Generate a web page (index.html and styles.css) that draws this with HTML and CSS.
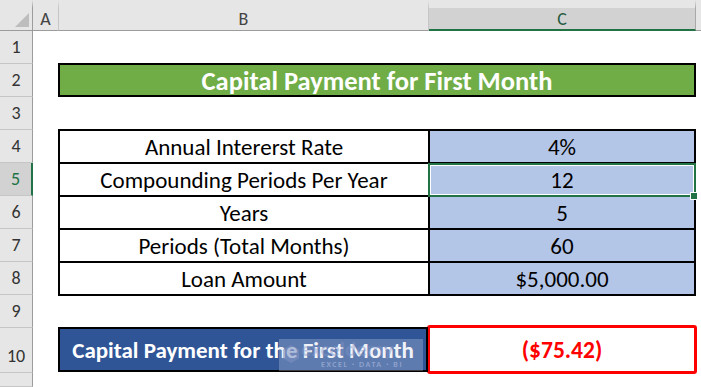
FILE: index.html
```html
<!DOCTYPE html>
<html lang="en">
<head>
<meta charset="utf-8">
<title>Capital Payment for First Month</title>
<link rel="stylesheet" href="styles.css">
</head>
<body>
<div class="sheet">
  <div class="hd corner"><span class="tri"></span></div>
  <div class="hd col">A</div>
  <div class="hd col">B</div>
  <div class="hd col sel">C</div>
  <div class="hd rest"></div>

  <div class="rh" style="grid-row:2">1</div>
  <div class="rh" style="grid-row:3">2</div>
  <div class="rh" style="grid-row:4">3</div>
  <div class="rh" style="grid-row:5">4</div>
  <div class="rh rsel" style="grid-row:6">5</div>
  <div class="rh" style="grid-row:7">6</div>
  <div class="rh" style="grid-row:8">7</div>
  <div class="rh" style="grid-row:9">8</div>
  <div class="rh" style="grid-row:10">9</div>
  <div class="rh" style="grid-row:11">10</div>
  <div class="rh" style="grid-row:12"></div>

  <div class="title">Capital Payment for First Month</div>

  <div class="table">
    <div class="lbl">Annual Intererst Rate</div><div class="val">4%</div>
    <div class="lbl">Compounding Periods Per Year</div><div class="val active">12</div>
    <div class="lbl">Years</div><div class="val">5</div>
    <div class="lbl">Periods (Total Months)</div><div class="val">60</div>
    <div class="lbl">Loan Amount</div><div class="val">$5,000.00</div>
  </div>

  <div class="result-label">Capital Payment for the First Month
    <div class="wm">
      <svg class="wm-icon" width="18" height="20" viewBox="0 0 18 20"><path d="M9 1 L17 5.5 L17 14.5 L9 19 L1 14.5 L1 5.5 Z" fill="#7d92c2"/></svg>
      <span class="wm-name">exceldemy</span>
      <span class="wm-sub">EXCEL · DATA · BI</span>
    </div>
  </div>
  <div class="result-value">($75.42)</div>
</div>
</body>
</html>
```

FILE: styles.css
```css
* { box-sizing: border-box; }
html, body { margin: 0; padding: 0; background: #fff; }
body { font-family: Carlito, Lato, "Liberation Sans", sans-serif; }

.sheet {
  display: grid;
  grid-template-columns: 33px 26px 370px 267px 1fr;
  grid-template-rows: 31px repeat(9, 33px) 45px 1fr;
  width: 701px;
  height: 387px;
  overflow: hidden;
}

.hd {
  grid-row: 1;
  background: #e6e6e6;
  border-top: 8px solid #e6e6e6;
  border-bottom: 1px solid #9c9c9c;
  border-right: 1px solid #c6c6c6;
  font-size: 18px;
  color: #444;
  display: flex;
  align-items: center;
  justify-content: center;
}
.hd.corner { position: relative; border-right: 1px solid #9c9c9c; }
.tri {
  position: absolute;
  right: 3px;
  bottom: 3px;
  width: 0; height: 0;
  border-left: 14px solid transparent;
  border-bottom: 14px solid #bdbdbd;
}
.hd.sel {
  background: #d2d2d2;
  border-bottom: 2px solid #217346;
  border-right: 1px solid #a8a8a8;
  color: #225a3e;
}
.hd.rest { border-right: none; }

.rh {
  grid-column: 1;
  background: #e6e6e6;
  border-right: 1px solid #9c9c9c;
  border-bottom: 1px solid #c6c6c6;
  font-size: 18px;
  color: #333;
  display: flex;
  align-items: flex-end;
  justify-content: center;
  padding-bottom: 5px;
}
.rh.rsel {
  background: #d2d2d2;
  border-right: 2px solid #217346;
  color: #217346;
}

.title {
  grid-column: 3 / 5;
  grid-row: 3;
  margin: -1px 0 0 -1px;
  height: 34px;
  background: #70ad47;
  border: 2px solid #000;
  color: #fff;
  font-weight: bold;
  font-size: 26.5px;
  display: flex;
  align-items: center;
  justify-content: center;
  padding-top: 1px;
}

.table {
  grid-column: 3 / 5;
  grid-row: 5 / 10;
  margin: -1px 0 0 -1px;
  height: 167px;
  background: #000;
  padding: 2px;
  display: grid;
  grid-template-columns: 368px 1fr;
  grid-auto-rows: 31px;
  gap: 2px;
  font-size: 23px;
  color: #000;
}
.lbl, .val {
  display: flex;
  align-items: center;
  justify-content: center;
  padding-top: 1px;
}
.lbl { background: #fff; }
.val { background: #b4c6e7; position: relative; }
.val.active::after {
  content: "";
  position: absolute;
  left: -2px; top: -1px; right: -2px; bottom: -2px;
  border: 2px solid #217346;
  box-shadow: inset 0 0 0 1px #fff;
}
.val.active::before {
  content: "";
  position: absolute;
  right: -4px; bottom: -5px;
  width: 6px; height: 6px;
  background: #217346;
  border: 1px solid #fff;
  z-index: 2;
}

.result-label {
  grid-column: 3;
  grid-row: 11;
  margin: -1px 1px 1px -1px;
  background: #2f5597;
  border: 2px solid #000;
  color: #fff;
  font-weight: bold;
  font-size: 23px;
  display: flex;
  align-items: center;
  justify-content: center;
  position: relative;
}
.wm {
  position: absolute;
  left: 219px;
  top: 10px;
  width: 144px;
  height: 32px;
  background: rgba(205, 212, 232, 0.3);
  display: grid;
  grid-template-columns: 22px 1fr;
  grid-template-rows: 20px 10px;
  align-items: center;
}
.wm-icon { grid-row: 1 / 3; margin-left: 3px; opacity: 0.55; }
.wm-name {
  font-size: 21px;
  font-weight: bold;
  line-height: 20px;
  color: rgba(130, 150, 200, 0.45);
}
.wm-sub {
  grid-column: 2;
  font-size: 8px;
  font-weight: bold;
  letter-spacing: 1.6px;
  line-height: 10px;
  color: rgba(165, 180, 218, 0.7);
  padding-left: 20px;
}

.result-value {
  grid-column: 4;
  grid-row: 11;
  margin: -3px -1px -1px -2px;
  border: 3px solid #ff0000;
  border-radius: 3px;
  background: #fff;
  color: #ff0000;
  font-weight: bold;
  font-size: 23.5px;
  display: flex;
  align-items: center;
  justify-content: center;
}
```
